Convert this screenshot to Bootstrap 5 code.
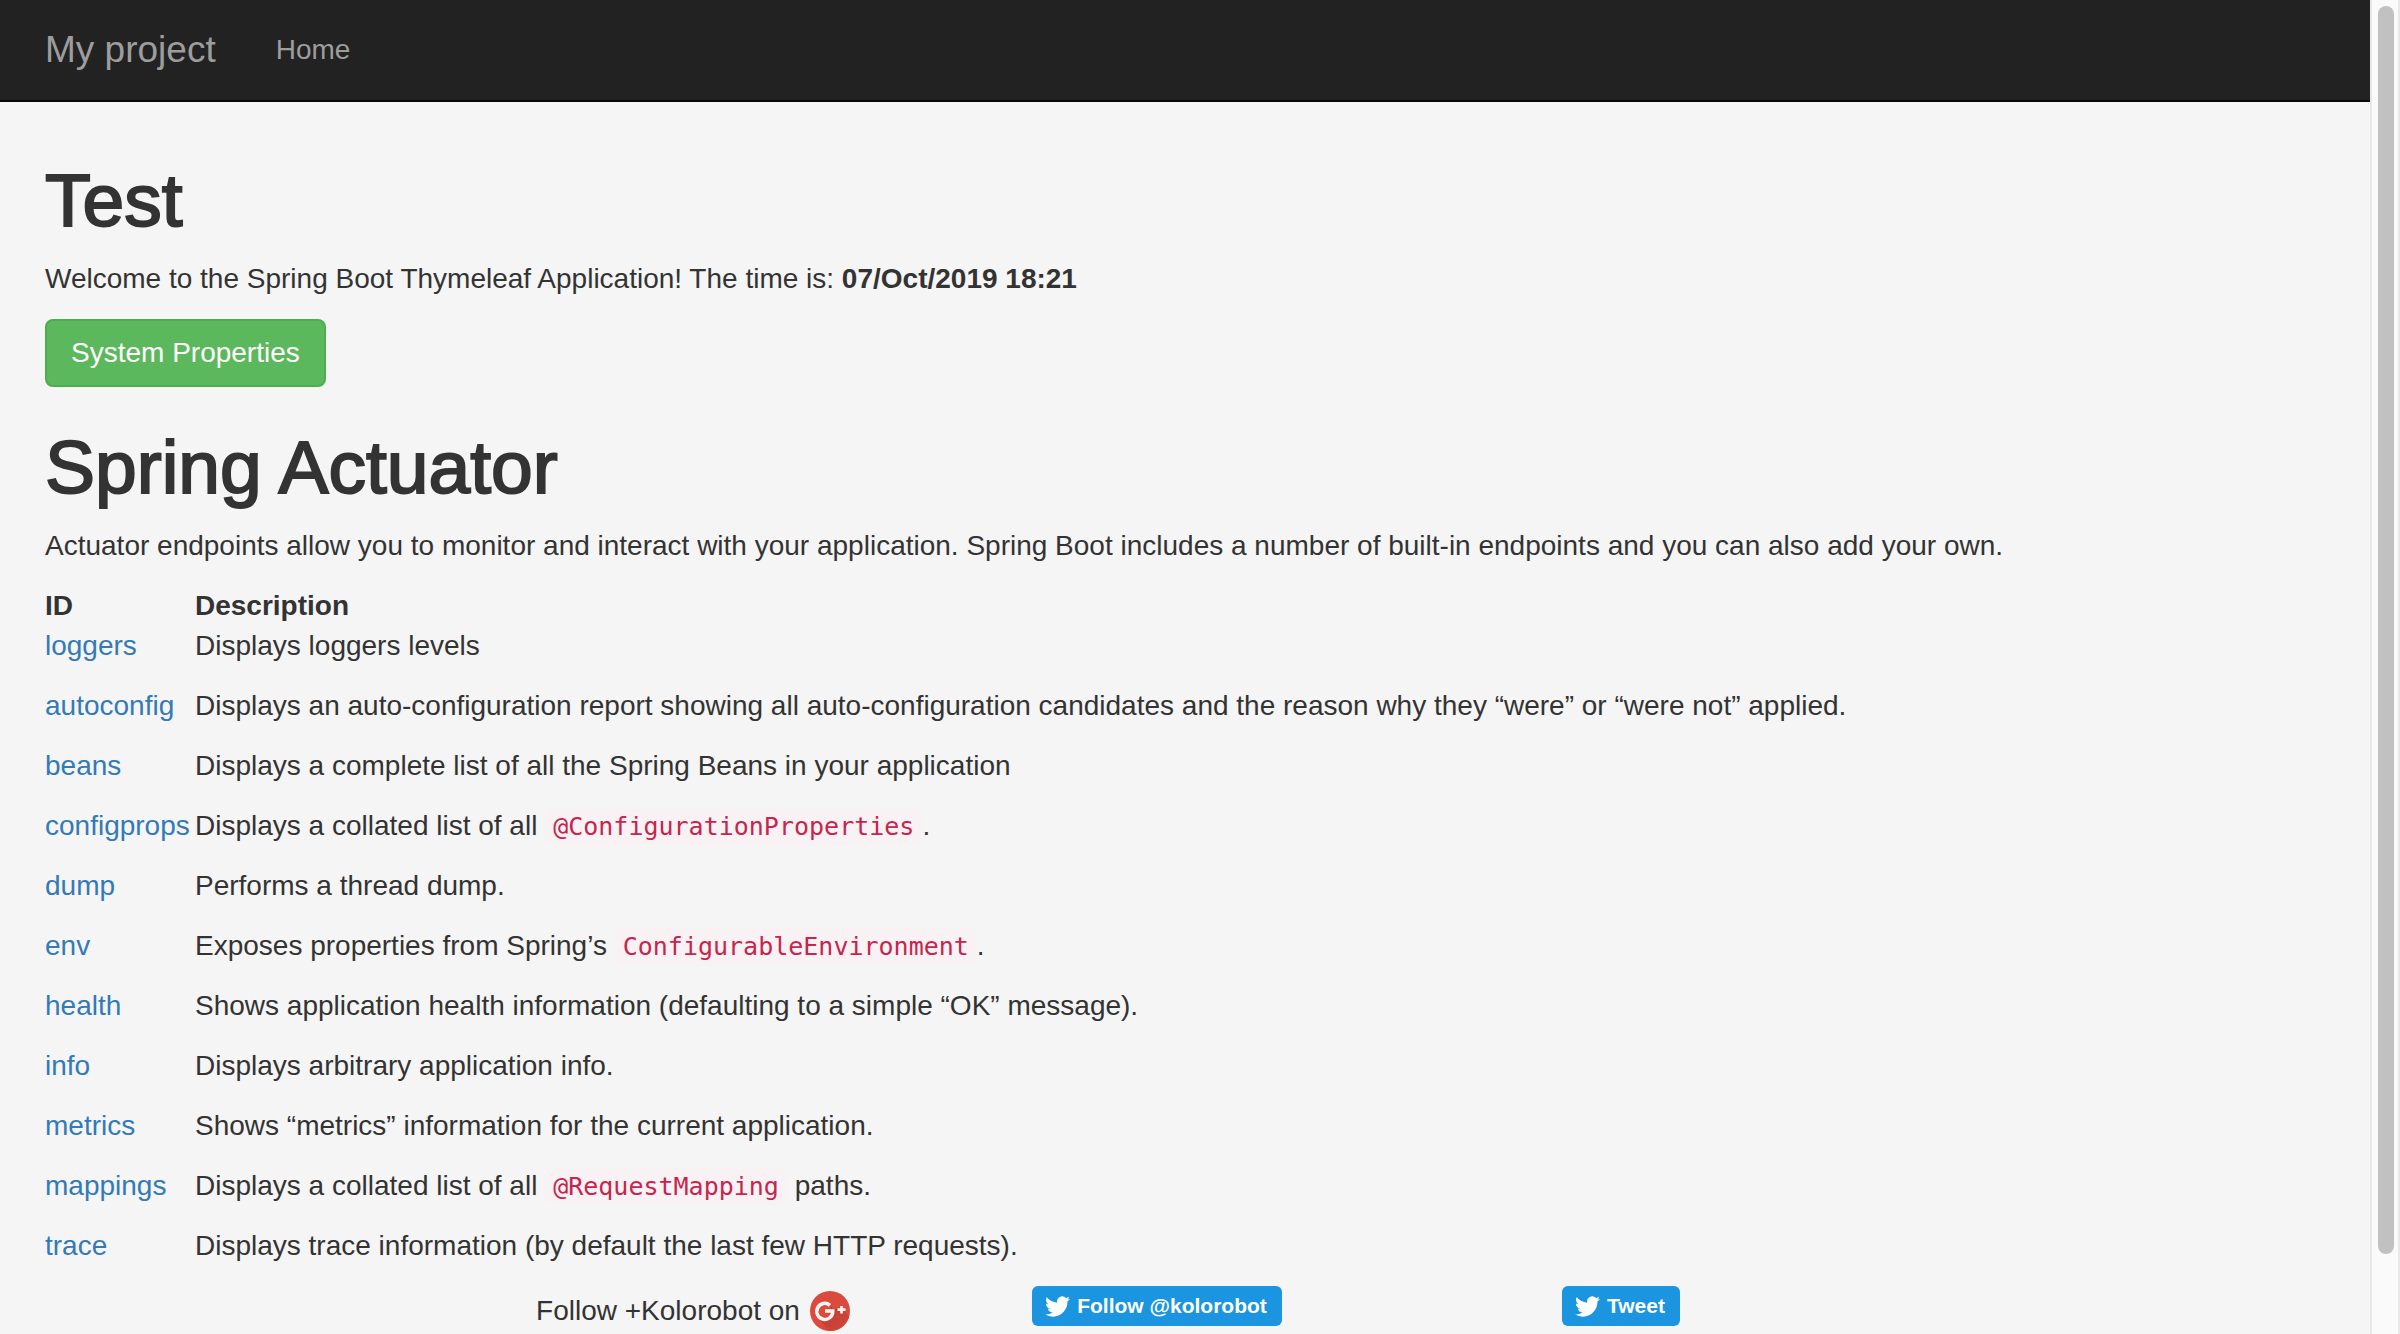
<!DOCTYPE html>
<html lang="en">
<head>
<meta charset="utf-8">
<meta name="viewport" content="width=device-width, initial-scale=1">
<title>My project</title>
<link rel="stylesheet" href="https://cdn.jsdelivr.net/npm/bootstrap@5.3.0/dist/css/bootstrap.min.css">
<style>
  body { font-family: "Liberation Sans", Arial, sans-serif; font-size: 28px; line-height: 40px; color: #333; background: #f5f5f5; }
  .top-nav { height: 102px; padding: 0 45px; background: #222; border-bottom: 2px solid #080808; }
  .top-nav a { color: #9d9d9d; }
  .top-nav .navbar-brand { font-size: 37px; margin-right: 60px; padding: 0; }
  .top-nav .nav-link { padding: 0; }
  main { padding: 58px 45px 0; }
  h1 { font-size: 75px; line-height: 81px; font-weight: 400; -webkit-text-stroke: 2px #333; margin: 0 0 18px; }
  p { margin-bottom: 20px; }
  .btn-row { margin-bottom: 40px; }
  .btn-props { font-size: 28px; line-height: 40px; padding: 12px 24px; color: #fff; background: #5cb85c; border: 2px solid #4cae4c; border-radius: 8px; }
  .endpoints th, .endpoints td { padding: 0; vertical-align: top; }
  .endpoints th:first-child { width: 150px; }
  .endpoints td { padding-bottom: 20px; }
  .endpoints a { color: #337ab7; text-decoration: none; }
  code { font-family: "DejaVu Sans Mono", monospace; font-size: 25px; line-height: 1; color: #c7254e; background: #f9f2f4; padding: 4px 8px; border-radius: 8px; }
  .social { padding-left: 416px; }
  .social > div { width: 464px; }
  .social .plus { color: #333; gap: 10px; margin-top: 5px; }
  .btn-tw { font-size: 21px; line-height: 40px; padding: 0 15px 0 13px; gap: 7px; color: #fff; background: #1b95e0; border-radius: 6px; }
  .scroll-track { width: 30px; height: 100vh; padding: 6px 4px 0 6px; background: #fafafa; border: solid #e8e8e8; border-width: 0 2px; }
  .scroll-thumb { width: 16px; height: 94%; background: #c1c1c1; border-radius: 8px; }
</style>
<script src="https://cdn.jsdelivr.net/npm/bootstrap@5.3.0/dist/js/bootstrap.bundle.min.js"></script>
</head>
<body class="d-flex vh-100 overflow-hidden">
<div class="flex-grow-1">
  <nav class="top-nav navbar justify-content-start">
    <a class="navbar-brand" href="#">My project</a>
    <a class="nav-link" href="#">Home</a>
  </nav>
  <main>
    <h1>Test</h1>
    <p>Welcome to the Spring Boot Thymeleaf Application! The time is: <strong>07/Oct/2019 18:21</strong></p>
    <div class="btn-row d-flex"><button type="button" class="btn btn-props">System Properties</button></div>
    <h1>Spring Actuator</h1>
    <p>Actuator endpoints allow you to monitor and interact with your application. Spring Boot includes a number of built-in endpoints and you can also add your own.</p>
    <table class="endpoints">
      <thead><tr><th>ID</th><th>Description</th></tr></thead>
      <tbody>
        <tr><td><a href="#">loggers</a></td><td>Displays loggers levels</td></tr>
        <tr><td><a href="#">autoconfig</a></td><td>Displays an auto-configuration report showing all auto-configuration candidates and the reason why they “were” or “were not” applied.</td></tr>
        <tr><td><a href="#">beans</a></td><td>Displays a complete list of all the Spring Beans in your application</td></tr>
        <tr><td><a href="#">configprops</a></td><td>Displays a collated list of all <code>@ConfigurationProperties</code>.</td></tr>
        <tr><td><a href="#">dump</a></td><td>Performs a thread dump.</td></tr>
        <tr><td><a href="#">env</a></td><td>Exposes properties from Spring’s <code>ConfigurableEnvironment</code>.</td></tr>
        <tr><td><a href="#">health</a></td><td>Shows application health information (defaulting to a simple “OK” message).</td></tr>
        <tr><td><a href="#">info</a></td><td>Displays arbitrary application info.</td></tr>
        <tr><td><a href="#">metrics</a></td><td>Shows “metrics” information for the current application.</td></tr>
        <tr><td><a href="#">mappings</a></td><td>Displays a collated list of all <code>@RequestMapping</code> paths.</td></tr>
        <tr><td><a href="#">trace</a></td><td>Displays trace information (by default the last few HTTP requests).</td></tr>
      </tbody>
    </table>
    <footer class="social d-flex align-items-start">
      <div class="d-flex justify-content-center">
        <a class="plus d-flex text-decoration-none" href="#">
          <span>Follow +Kolorobot on</span>
          <svg width="40" height="40" viewBox="0 0 40 40" aria-hidden="true">
            <defs>
              <linearGradient id="shade" x1="0" y1="0" x2="1" y2="1"><stop offset="0" stop-color="#b93a2e"/><stop offset="1" stop-color="#d4483b"/></linearGradient>
              <clipPath id="disc"><circle cx="20" cy="20" r="20"/></clipPath>
            </defs>
            <circle cx="20" cy="20" r="20" fill="#dc4a3d"/>
            <path clip-path="url(#disc)" fill="url(#shade)" d="M20 13 L23 19 L30 16 L40 26 L40 40 L19 40 L8 27 L22 25Z"/>
            <path d="M20 14.300A8 8 0 1 0 22.800 20H15" fill="none" stroke="#f7f3f3" stroke-width="3.500"/>
            <path d="M31.500 15v7.500M27.500 18.700h8" fill="none" stroke="#f7f3f3" stroke-width="2.700"/>
          </svg>
        </a>
      </div>
      <div class="d-flex justify-content-center">
        <a class="btn-tw d-flex align-items-center fw-bold text-decoration-none" href="#">
          <svg width="25" height="25" viewBox="0 0 24 24" fill="#fff" aria-hidden="true"><path d="M23.953 4.570a10 10 0 0 1-2.825.775 4.958 4.958 0 0 0 2.163-2.723 9.900 9.900 0 0 1-3.127 1.184 4.920 4.920 0 0 0-8.384 4.482C7.690 8.095 4.067 6.130 1.640 3.162a4.822 4.822 0 0 0-.666 2.475c0 1.710.870 3.213 2.188 4.096a4.904 4.904 0 0 1-2.228-.616v.060a4.923 4.923 0 0 0 3.946 4.827 4.996 4.996 0 0 1-2.212.085 4.936 4.936 0 0 0 4.604 3.417 9.867 9.867 0 0 1-6.102 2.105c-.390 0-.779-.023-1.170-.067a13.995 13.995 0 0 0 7.557 2.209c9.053 0 13.998-7.496 13.998-13.985 0-.210 0-.420-.015-.630A9.935 9.935 0 0 0 24 4.590z"/></svg>
          Follow @kolorobot
        </a>
      </div>
      <div class="d-flex justify-content-center">
        <a class="btn-tw d-flex align-items-center fw-bold text-decoration-none" href="#">
          <svg width="25" height="25" viewBox="0 0 24 24" fill="#fff" aria-hidden="true"><path d="M23.953 4.570a10 10 0 0 1-2.825.775 4.958 4.958 0 0 0 2.163-2.723 9.900 9.900 0 0 1-3.127 1.184 4.920 4.920 0 0 0-8.384 4.482C7.690 8.095 4.067 6.130 1.640 3.162a4.822 4.822 0 0 0-.666 2.475c0 1.710.870 3.213 2.188 4.096a4.904 4.904 0 0 1-2.228-.616v.060a4.923 4.923 0 0 0 3.946 4.827 4.996 4.996 0 0 1-2.212.085 4.936 4.936 0 0 0 4.604 3.417 9.867 9.867 0 0 1-6.102 2.105c-.390 0-.779-.023-1.170-.067a13.995 13.995 0 0 0 7.557 2.209c9.053 0 13.998-7.496 13.998-13.985 0-.210 0-.420-.015-.630A9.935 9.935 0 0 0 24 4.590z"/></svg>
          Tweet
        </a>
      </div>
    </footer>
  </main>
</div>
<div class="scroll-track flex-shrink-0"><div class="scroll-thumb"></div></div>
</body>
</html>
